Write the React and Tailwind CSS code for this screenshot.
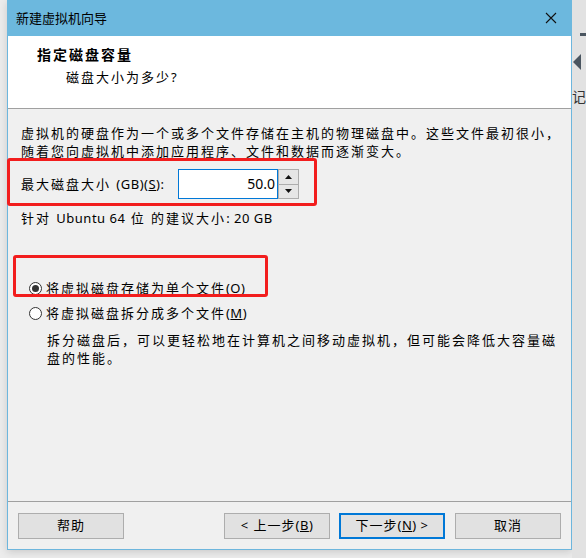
import React from 'react';

function Radio({ checked }) {
  return (
    <span className="w-[13px] h-[13px] rounded-full border border-[#333333] bg-white flex items-center justify-center shrink-0">
      {checked && <span className="w-[7px] h-[7px] rounded-full bg-[#333333]" />}
    </span>
  );
}

function Btn({ children, primary }) {
  return (
    <button
      className={
        primary
          ? 'w-[106px] h-[26px] bg-[#e1e1e1] border-2 border-[#0078d7] text-[13px] tracking-[1px] text-black flex items-center justify-center'
          : 'w-[106px] h-[26px] bg-[#e1e1e1] border border-[#adadad] text-[13px] tracking-[1px] text-black flex items-center justify-center'
      }
    >
      {children}
    </button>
  );
}

// latin bits inside the spaced-out CJK text
const L = ({ children }) => <span className="tracking-[0.5px]">{children}</span>;

export default function App() {
  return (
    <div className="relative w-[586px] h-[558px] bg-[#ececec] flex overflow-hidden font-['Noto_Sans','Noto_Sans_CJK_SC',sans-serif] text-black">
      <div className="w-[7px]" />
      {/* dialog window */}
      <div className="w-[571px] h-[550px] flex flex-col border-x border-b border-[#6db6dd] bg-[#f0f0f0] shadow-[0_2px_8px_rgba(0,0,0,0.15)]">
        <div className="h-[36px] bg-[#6cb8de] flex items-center justify-between pl-[9px] pr-[15px] -mx-px">
          <span className="text-[13px] leading-none">新建虚拟机向导</span>
          <svg width="12" height="12" viewBox="0 0 12 12">
            <path d="M1 1 L11 11 M11 1 L1 11" stroke="#111" strokeWidth="1.1" />
          </svg>
        </div>
        <div className="h-[73px] bg-white border-b border-[#a0a0a0] flex flex-col text-[13px] tracking-[2px]">
          <div className="mt-[10px] pl-[29px] font-bold text-[14px] leading-[18px]">指定磁盘容量</div>
          <div className="mt-[4px] pl-[58px] leading-[18px]">
            磁盘大小为多少<L>?</L>
          </div>
        </div>
        <div className="flex-1 flex flex-col pl-[13px] text-[13px] tracking-[2px] leading-[18px]">
          <p className="mt-[15px]">
            虚拟机的硬盘作为一个或多个文件存储在主机的物理磁盘中。这些文件最初很小，
            <br />
            随着您向虚拟机中添加应用程序、文件和数据而逐渐变大。
          </p>
          <div className="mt-[9px] h-[30px] flex items-center">
            <span className="w-[157px]">
              最大磁盘大小 <L>(GB)(<span className="underline">S</span>):</L>
            </span>
            <div className="w-[100px] h-[30px] bg-white border border-[#0078d7] flex items-center justify-end pr-[2px] text-[14px] tracking-normal">
              50.0
            </div>
            <div className="w-[21px] h-[30px] border border-[#adadad] flex flex-col">
              <div className="flex-1 bg-[#e6e6e6] border-b border-[#adadad] flex items-center justify-center">
                <svg width="7" height="4" viewBox="0 0 7 4"><path d="M3.5 0 L7 4 L0 4 Z" fill="#111" /></svg>
              </div>
              <div className="flex-1 bg-[#e6e6e6] flex items-center justify-center">
                <svg width="7" height="4" viewBox="0 0 7 4"><path d="M0 0 L7 0 L3.5 4 Z" fill="#111" /></svg>
              </div>
            </div>
          </div>
          <div className="mt-[10px]">
            针对 <L>Ubuntu 64</L> 位 的建议大小<L>: 20 GB</L>
          </div>
          <div className="mt-[52px] flex items-center gap-[4px] pl-[8px]">
            <Radio checked />
            <span>
              将虚拟磁盘存储为单个文件<L>(<span className="underline">O</span>)</L>
            </span>
          </div>
          <div className="mt-[7px] flex items-center gap-[4px] pl-[8px]">
            <Radio />
            <span>
              将虚拟磁盘拆分成多个文件<L>(<span className="underline">M</span>)</L>
            </span>
          </div>
          <p className="mt-[9px] pl-[26px]">
            拆分磁盘后，可以更轻松地在计算机之间移动虚拟机，但可能会降低大容量磁
            <br />
            盘的性能。
          </p>
        </div>
        <div className="h-[48px] border-t border-[#a0a0a0] flex items-start pt-[11px] px-[10px]">
          <Btn>帮助</Btn>
          <div className="flex-1" />
          <div className="flex gap-[9px]">
            <Btn>
              &lt; 上一步<L>(<span className="underline">B</span>)</L>
            </Btn>
            <Btn primary>
              下一步<L>(<span className="underline">N</span>) &gt;</L>
            </Btn>
            <div className="ml-px">
              <Btn>取消</Btn>
            </div>
          </div>
        </div>
      </div>
      {/* background window peeking out on the right */}
      <div className="flex-1 bg-[#e2e2e2] flex flex-col items-end pt-[33px]">
        <div className="w-[6px] h-[3px] bg-[#4a5560]" />
        <svg className="mt-[18px] self-start ml-[1px]" width="8" height="16" viewBox="0 0 8 16">
          <path d="M8 0 L0 8 L8 16 Z" fill="#4a5560" />
        </svg>
        <span className="mt-[20px] self-start text-[14px] leading-none text-[#333]">记</span>
      </div>

      {/* red annotation boxes */}
      <div className="absolute left-[7px] top-[158px] w-[310px] h-[48px] border-[3px] border-[#f21d1d] rounded-[3px]" />
      <div className="absolute left-[13px] top-[255px] w-[255px] h-[42px] border-[3px] border-[#f21d1d] rounded-[3px]" />
    </div>
  );
}
